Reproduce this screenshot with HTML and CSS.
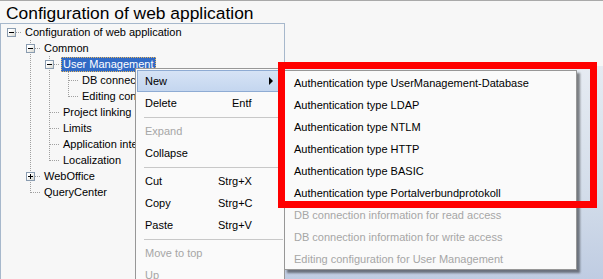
FILE: index.html
```html
<!DOCTYPE html>
<html lang="en">
<head>
  <meta charset="UTF-8">
  <meta name="viewport" content="width=device-width, initial-scale=1.0">
  <title>Configuration of web application</title>
  <link rel="stylesheet" href="styles.css">
</head>
<body>
  <h1 class="title">Configuration of web application</h1>

  <div class="main">
    <div class="tree">
      <div class="row">
        <span class="cell r"><span class="box minus"></span></span>
        <span class="label">Configuration of web application</span>
      </div>
      <div class="row">
        <span class="cell"></span>
        <span class="cell t"><span class="box minus"></span></span>
        <span class="label">Common</span>
      </div>
      <div class="row">
        <span class="cell"></span>
        <span class="cell v"></span>
        <span class="cell t"><span class="box minus"></span></span>
        <span class="label selected">User Management</span>
      </div>
      <div class="row">
        <span class="cell"></span>
        <span class="cell v"></span>
        <span class="cell v"></span>
        <span class="cell t"></span>
        <span class="label">DB connection information</span>
      </div>
      <div class="row">
        <span class="cell"></span>
        <span class="cell v"></span>
        <span class="cell v"></span>
        <span class="cell l"></span>
        <span class="label">Editing configuration</span>
      </div>
      <div class="row">
        <span class="cell"></span>
        <span class="cell v"></span>
        <span class="cell t"></span>
        <span class="label">Project linking</span>
      </div>
      <div class="row">
        <span class="cell"></span>
        <span class="cell v"></span>
        <span class="cell t"></span>
        <span class="label">Limits</span>
      </div>
      <div class="row">
        <span class="cell"></span>
        <span class="cell v"></span>
        <span class="cell t"></span>
        <span class="label">Application interfaces</span>
      </div>
      <div class="row">
        <span class="cell"></span>
        <span class="cell v"></span>
        <span class="cell l"></span>
        <span class="label">Localization</span>
      </div>
      <div class="row">
        <span class="cell"></span>
        <span class="cell t"><span class="box plus"></span></span>
        <span class="label">WebOffice</span>
      </div>
      <div class="row">
        <span class="cell"></span>
        <span class="cell l"></span>
        <span class="label">QueryCenter</span>
      </div>
    </div>
    <div class="desk"></div>
  </div>

  <!-- context menu of the tree node -->
  <div class="menu context-menu">
    <div class="item active">
      <span>New</span>
      <span class="arrow"></span>
    </div>
    <div class="item"><span>Delete</span><span class="key entf">Entf</span></div>
    <div class="sep"></div>
    <div class="item disabled"><span>Expand</span></div>
    <div class="item"><span>Collapse</span></div>
    <div class="sep"></div>
    <div class="item"><span>Cut</span><span class="key">Strg+X</span></div>
    <div class="item"><span>Copy</span><span class="key">Strg+C</span></div>
    <div class="item"><span>Paste</span><span class="key">Strg+V</span></div>
    <div class="sep"></div>
    <div class="item disabled"><span>Move to top</span></div>
    <div class="item disabled"><span>Up</span></div>
  </div>

  <div class="menu submenu">
    <div class="item">Authentication type UserManagement-Database</div>
    <div class="item">Authentication type LDAP</div>
    <div class="item">Authentication type NTLM</div>
    <div class="item">Authentication type HTTP</div>
    <div class="item">Authentication type BASIC</div>
    <div class="item">Authentication type Portalverbundprotokoll</div>
    <div class="item disabled">DB connection information for read access</div>
    <div class="item disabled">DB connection information for write access</div>
    <div class="item disabled">Editing configuration for User Management</div>
  </div>

  <div class="mark"></div>
</body>
</html>
```

FILE: styles.css
```css
:root {
  --dv: repeating-linear-gradient(to bottom, #a0a0a0 0 1px, transparent 1px 2px);
  --dh: repeating-linear-gradient(to right, #a0a0a0 0 1px, transparent 1px 2px);
}
html, body {
  height: 100%;
}
body {
  margin: 0;
  background: #f7f7f7;
  border-top: 1px solid #a9a9a9;
  box-sizing: border-box;
  font-family: 'Liberation Sans', Arial, sans-serif;
  font-size: 11px;
  color: #000;
  overflow: hidden;
  display: flex;
  flex-direction: column;
}
.title {
  margin: 0;
  padding: 2px 0 0 6px;
  height: 20px;
  font-size: 17.4px;
  font-weight: normal;
  line-height: 20px;
}
.main {
  flex: 1;
  display: flex;
}
.tree {
  flex: none;
  width: 285px;
  border: 1px solid #a7b8cc;
  border-bottom: none;
  padding-left: 1px;
  box-sizing: border-box;
  overflow: hidden;
}
.desk {
  flex: 1;
  margin-top: 43px;
  background: linear-gradient(#e6ebf2, #d3ddea 60%, #bfcce2);
}
.row {
  display: flex;
  align-items: center;
  height: 16px;
  white-space: nowrap;
}
.cell {
  flex: none;
  width: 19px;
  height: 16px;
  display: flex;
  align-items: center;
  justify-content: center;
  background-repeat: no-repeat;
}
.cell.v {
  background-image: var(--dv);
  background-size: 1px 16px;
  background-position: 9px 0;
}
.cell.t {
  background-image: var(--dv), var(--dh);
  background-size: 1px 16px, 10px 1px;
  background-position: 9px 0, 10px 8px;
}
.cell.l {
  background-image: var(--dv), var(--dh);
  background-size: 1px 9px, 10px 1px;
  background-position: 9px 0, 10px 8px;
}
.cell.r {
  background-image: var(--dh);
  background-size: 10px 1px;
  background-position: 10px 8px;
}
.box {
  width: 9px;
  height: 9px;
  box-sizing: border-box;
  border: 1px solid #8a9cb0;
  background: linear-gradient(135deg, #ffffff 30%, #d6d6ce);
  display: grid;
  place-items: center;
}
.box::before, .box::after {
  content: "";
  grid-area: 1 / 1;
  background: #000;
}
.box::before {
  width: 5px;
  height: 1px;
}
.box.minus::after {
  display: none;
}
.box.plus::after {
  width: 1px;
  height: 5px;
}
.label {
  margin-left: 2px;
  padding: 0 2px;
  line-height: 15px;
}
.label.selected {
  background: #316ac5;
  color: #fff;
  outline: 1px dotted #e8b860;
  outline-offset: -1px;
}

/* menus */
.menu {
  position: absolute;
  background: #fafafa;
  border: 1px solid #979797;
  box-sizing: border-box;
  padding: 1px;
  overflow: hidden;
}
.context-menu {
  left: 135px;
  top: 68px;
  width: 150px;
  height: 211px;
  border-bottom: none;
}
.submenu {
  left: 284px;
  top: 70px;
  width: 293px;
  height: 200px;
  padding: 1px 0 0 0;
  box-shadow: 3px 3px 2px rgba(0, 0, 0, 0.45);
}
.item {
  display: flex;
  align-items: center;
  height: 22px;
  box-sizing: border-box;
  border: 1px solid transparent;
  padding-left: 7px;
  white-space: nowrap;
}
.context-menu .item span:first-child {
  width: 73px;
}
.submenu .item {
  padding-left: 8px;
}
.item.disabled {
  color: #a6a6a6;
}
.item.active {
  background: linear-gradient(#d6e3f5, #c4d6ef);
  border-color: #8eabd3;
  border-right-color: #55606c;
}
.key.entf {
  margin-left: 14px;
}
.arrow {
  margin-left: auto;
  margin-right: 9px;
  width: 0;
  height: 0;
  border-top: 4px solid transparent;
  border-bottom: 4px solid transparent;
  border-left: 4px solid #000;
}
.sep {
  height: 1px;
  background: #c8c8c8;
  margin: 3px 0 2px 7px;
}

/* red annotation frame */
.mark {
  position: absolute;
  left: 278px;
  top: 62px;
  width: 319px;
  height: 146px;
  border: 7px solid #f00;
  box-sizing: border-box;
}
```
